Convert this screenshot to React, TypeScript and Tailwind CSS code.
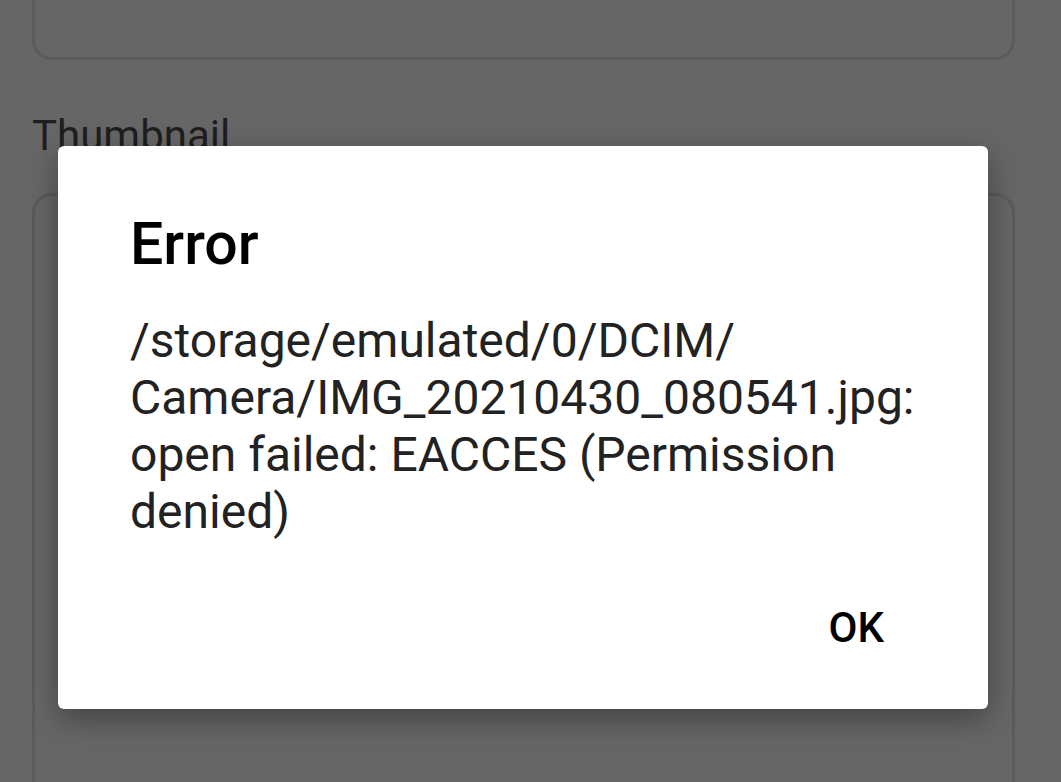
export default function App() {
  return (
    <div
      className="relative h-[782px] w-[1061px] overflow-hidden bg-[#666666]"
      style={{ fontFamily: 'Roboto, "Noto Sans", sans-serif' }}
    >
      {/* page behind the scrim */}
      <div className="ml-[32px] w-[983px]">
        <div className="-mt-[100px] h-[160px] rounded-[20px] border-[3px] border-[#5b5b5b]" />
        <div className="mt-[52px] text-[42px] leading-[48px] text-[#1e1e1e]">Thumbnail</div>
        <div className="mt-[33px] h-[700px] rounded-[20px] border-[3px] border-[#5b5b5b]" />
      </div>

      {/* dialog */}
      <div className="absolute left-[58px] top-[146px] w-[930px] rounded-[6px] bg-white shadow-[0_10px_30px_rgba(0,0,0,0.35)]">
        <div className="px-[72px] pt-[62px]">
          <h2 className="text-[59px] font-medium leading-[72px] text-black">Error</h2>
          <div className="mt-[32px] text-[48px] leading-[57px] text-[#222222]">
            <div>/storage/emulated/0/DCIM/</div>
            <div>Camera/IMG_20210430_080541.jpg:</div>
            <div>open failed: EACCES (Permission</div>
            <div>denied)</div>
          </div>
        </div>
        <div className="flex justify-end pb-[57px] pr-[104px] pt-[64px]">
          <button className="text-[42px] font-medium leading-[48px] text-black">OK</button>
        </div>
      </div>
    </div>
  )
}
